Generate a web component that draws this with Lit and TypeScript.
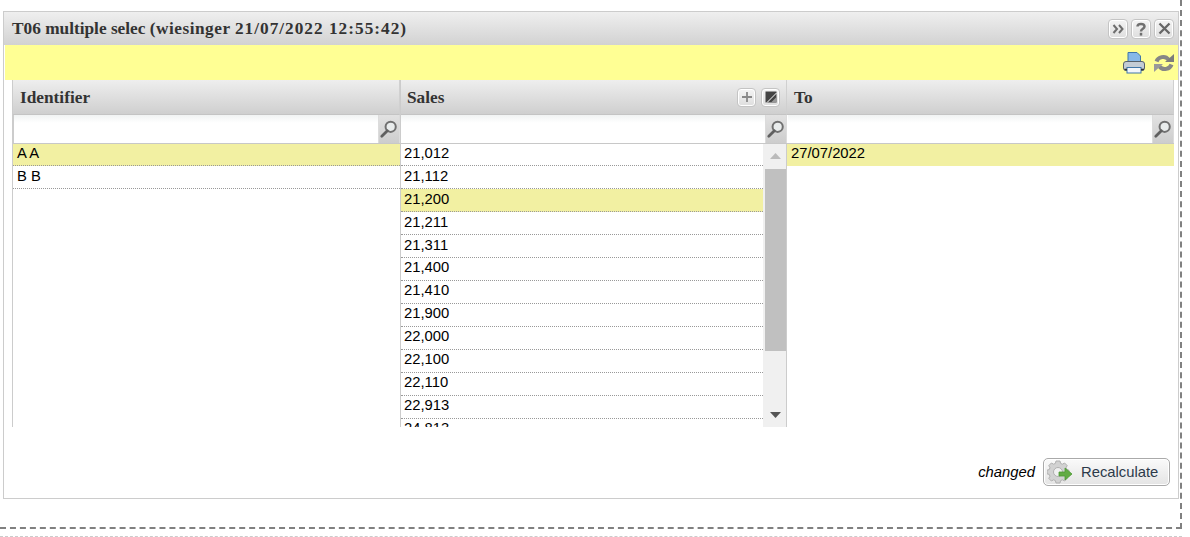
import { LitElement, html, css, svg } from "lit";
import { customElement } from "lit/decorators.js";

const SALES = ["21,012","21,112","21,200","21,211","21,311","21,400","21,410","21,900","22,000","22,100","22,110","22,913","24,813"];

const lens = html`<svg class="lens" viewBox="0 0 18 18" width="20" height="20"><circle cx="10.500" cy="7" r="4.600" fill="#e9ecec" stroke="#707070" stroke-width="1.800"/><path d="M7.500 10.500 L2.500 15.500" stroke="#606060" stroke-width="2.500" stroke-linecap="round"/></svg>`;

const gear = svg`<path d="M9 1h4l.6 2.4 1.8.8L17.600 3l2.600 2.600-1.200 2.200.8 1.800L22 10.200v3.600l-2.200.6-.8 1.800 1.200 2.200-2.600 2.600-2.200-1.200-1.800.8L13 23H9l-.6-2.400-1.800-.8-2.200 1.200-2.600-2.600 1.200-2.200-.8-1.800L0 13.800v-3.600l2.200-.6.8-1.800L1.800 5.600 4.400 3l2.200 1.200 1.800-.8z" fill="#d2d2d2" stroke="#b0b0b0"/><circle cx="11" cy="12" r="4.500" fill="#f0f0f0" stroke="#b0b0b0"/>`;

@customElement("app-root")
export class AppRoot extends LitElement {
  static styles = css`
    :host { display: block; width: 1190px; height: 537px; font-family: "Liberation Sans", Arial, sans-serif; font-size: 14.800px; color: #000; overflow: hidden; background: #fff; }
    .outer { box-sizing: border-box; width: 1182px; height: 529px; padding: 11px 0 0 3px; border-right: 2px dashed #808080; border-bottom: 2px dashed #808080; }
    .trail { height: 7px; border-bottom: 1px dashed #ccc; width: 1182px; }
    .panel { box-sizing: border-box; width: 1176px; height: 488px; border: 1px solid #ccc; display: flex; flex-direction: column; }
    .title { height: 33px; flex: none; display: flex; align-items: center; justify-content: space-between; padding: 0 4px 0 8px; background: linear-gradient(#efefef, #d2d2d2); font-family: "Liberation Serif", serif; font-weight: bold; font-size: 17.300px; color: #333; }
    .title .label { padding-top: 1px; }
    .title .user { letter-spacing: 0.5px; }
    .title .date { letter-spacing: 1px; }
    .btns { display: flex; gap: 3px; }
    .mini { box-sizing: border-box; width: 20px; height: 20px; border: 1px solid #c4c4c4; border-radius: 4px; background: linear-gradient(#f4f4f4, #dedede); display: flex; align-items: center; justify-content: center; box-shadow: inset 0 0 0 1px #fff; }
    .tools { height: 35px; flex: none; margin-left: 1px; background: #ffff94; display: flex; justify-content: flex-end; align-items: center; gap: 7px; padding: 0 3px 0 0; }
    .grid { flex: none; margin-left: 8px; width: 1162px; display: grid; grid-template-columns: 388px 387px 387px; grid-template-rows: 347px; }
    .col { display: flex; flex-direction: column; min-width: 0; min-height: 0; overflow: hidden; box-sizing: border-box; }
    .col.a { border-left: 1px solid #ccc; }
    .col.b { border-left: 1px solid #ccc; }
    .head { box-sizing: border-box; height: 35px; flex: none; display: flex; align-items: center; justify-content: space-between; padding: 0 6px 0 7px; background: linear-gradient(#eeeeee, #cfcfcf); border-bottom: 1px solid #c4c4c4; border-right: 1px solid #d0d0d0; font-family: "Liberation Serif", serif; font-weight: bold; font-size: 17.300px; color: #333; }
    .head .name { padding-top: 1px; }
    .col.b .head { padding-left: 6px; }
    .head .btns { gap: 5px; }
    .head .mini { width: 19px; height: 19px; }
    .filter { box-sizing: border-box; height: 29px; flex: none; display: flex; border-bottom: 1px solid #c8c8c8; margin-bottom: -1px; position: relative; }
    .filter .inp { flex: 1; background: linear-gradient(#f1f3f3 0, #fff 8px); border-left: 1px solid #ccc; }
    .col.b .filter .inp { border-left: none; }
    .col.c .filter .inp { border-left: none; margin-left: 1px; }
    .filter .srch { box-sizing: border-box; width: 22px; background: linear-gradient(#e2e2e2, #cdcdcd); border-left: 1px solid #dcdcdc; border-right: 1px solid #dcdcdc; display: flex; align-items: center; justify-content: center; }
    .body { flex: 1; display: flex; min-height: 0; overflow: hidden; }
    .rows { flex: 1; min-width: 0; }
    .row { box-sizing: border-box; height: 23px; padding: 0 0 0 4px; line-height: 19px; border-bottom: 1px dotted #999; white-space: nowrap; }
    .col.b .row { padding-left: 3px; }
    .rows .row:nth-child(-n+5) { padding-top: 1px; }
    .row.sel { background: #f2f0a2; }
    .col.c .row { border-bottom: none; }
    .sb { width: 23px; flex: none; background: #f0f0f0; display: flex; flex-direction: column; border-right: 1px solid #ccc; box-sizing: content-box; }
    .sb .up { height: 26px; display: flex; align-items: center; justify-content: center; flex: none; padding-left: 2px; }
    .sb .thumb { height: 182px; background: #c0c0c0; flex: none; margin-left: 2px; }
    .sb .down { flex: 1; display: flex; align-items: flex-end; justify-content: center; padding: 0 0 9px 2px; }
    .foot { flex: 1; display: flex; justify-content: flex-end; align-items: flex-start; padding: 31px 8px 0 0; gap: 8px; }
    .changed { font-style: italic; line-height: 28px; }
    .recalc { box-sizing: border-box; width: 127px; height: 28px; border: 1px solid #aaa; border-radius: 5px; background: linear-gradient(#fafafa, #e4e4e4); display: flex; align-items: center; padding-left: 3px; color: #2c3a4a; box-shadow: inset 0 0 0 1px #fff; }
    .recalc span { margin-left: 6px; }
  `;

  render() {
    return html`
      <div class="outer">
        <div class="panel">
          <div class="title">
            <span class="label">T06 multiple selec <span class="user">(wiesinger</span> <span class="date">21/07/2022 12:55:42)</span></span>
            <div class="btns">
              <div class="mini"><svg width="13" height="12" viewBox="0 0 13 12" fill="none" stroke="#6e6e6e" stroke-width="2"><path d="M1.500 2 5 6 1.500 10M7 2l3.500 4L7 10"/></svg></div>
              <div class="mini"><svg width="12" height="14" viewBox="0 0 12 14" fill="none" stroke="#707070" stroke-width="2.500"><path d="M2.500 4.500C2.500 1 9.500 1 9.500 4.500 9.500 7 6 6.500 6 9.500"/><path d="M6 10.800v2.800"/></svg></div>
              <div class="mini"><svg width="13" height="13" viewBox="0 0 13 13" fill="none" stroke="#666" stroke-width="2.300"><path d="M1.500 1.500l10 10M11.500 1.500l-10 10"/></svg></div>
            </div>
          </div>
          <div class="tools">
            <svg width="24" height="24" viewBox="0 0 24 24"><path d="M6 1.500h9l3.500 3.500v8H6z" fill="#86b8e8" stroke="#3f76a8"/><rect x="1.500" y="10.500" width="21" height="9" rx="2.500" fill="#c3ccd5" stroke="#55606a"/><rect x="5" y="16.500" width="14" height="5.500" fill="#f2f6fb" stroke="#3f76a8"/><path d="M2.500 18.500H5M19 18.500h3" stroke="#333" stroke-width="1.500"/></svg>
            <svg width="22" height="22" viewBox="0 0 22 22" fill="none" stroke="#868686" stroke-width="4"><path d="M3.500 9.500C5 5 12 3 15.500 7.500"/><path d="M12 10h9V2z" fill="#7c7c7c" stroke="none"/><path d="M18.500 12.500C17 17 10 19 6.500 14.500"/><path d="M10 12H1v8z" fill="#9a9a9a" stroke="none"/></svg>
          </div>
          <div class="grid">
            <div class="col a">
              <div class="head"><span class="name">Identifier</span></div>
              <div class="filter"><div class="inp"></div><div class="srch">${lens}</div></div>
              <div class="body"><div class="rows">
                <div class="row sel">A A</div>
                <div class="row">B B</div>
              </div></div>
            </div>
            <div class="col b">
              <div class="head"><span class="name">Sales</span>
                <div class="btns">
                  <div class="mini"><svg width="12" height="12" viewBox="0 0 12 12" stroke="#888" stroke-width="1.800"><path d="M6 1v10M1 6h10"/></svg></div>
                  <div class="mini"><svg width="14" height="14" viewBox="0 0 14 14"><path d="M1.500 1.500h11v11h-11z" fill="#444"/><path d="M3 12.500 12.500 3" stroke="#fff" stroke-width="1"/><path d="M7 12.500l5.500-5.500v5.500z" fill="#999"/></svg></div>
                </div>
              </div>
              <div class="filter"><div class="inp"></div><div class="srch">${lens}</div></div>
              <div class="body">
                <div class="rows">
                  ${SALES.map((s) => html`<div class="row ${s === "21,200" ? "sel" : ""}">${s}</div>`)}
                </div>
                <div class="sb">
                  <div class="up"><svg width="11" height="6" viewBox="0 0 11 6"><path d="M5.500 0L11 6H0z" fill="#bbb"/></svg></div>
                  <div class="thumb"></div>
                  <div class="down"><svg width="11" height="6" viewBox="0 0 11 6"><path d="M0 0h11L5.500 6z" fill="#555"/></svg></div>
                </div>
              </div>
            </div>
            <div class="col c">
              <div class="head"><span class="name">To</span></div>
              <div class="filter"><div class="inp"></div><div class="srch">${lens}</div></div>
              <div class="body"><div class="rows">
                <div class="row sel">27/07/2022</div>
              </div></div>
            </div>
          </div>
          <div class="foot">
            <div class="changed">changed</div>
            <div class="recalc">
              <svg width="28" height="24" viewBox="0 0 28 24">${gear}<path d="M12 12h6V8l7 6-7 6v-4h-6z" fill="#62ab44" stroke="#4b9a32" stroke-width=".8"/></svg>
              <span>Recalculate</span>
            </div>
          </div>
        </div>
      </div>
      <div class="trail"></div>
    `;
  }
}
